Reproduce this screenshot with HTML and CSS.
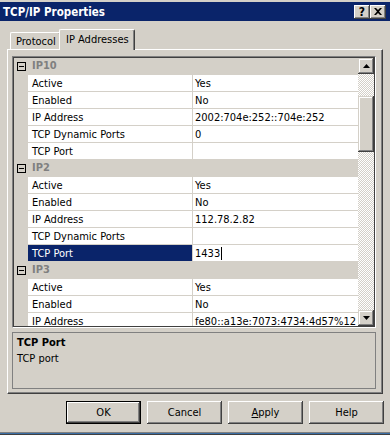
FILE: index.html
```html
<!DOCTYPE html>
<html lang="en">
<head>
    <meta charset="UTF-8">
    <title>TCP/IP Properties</title>
    <link rel="stylesheet" href="styles.css">
</head>
<body>
    <div class="window">
        <div class="titlebar">
            <span class="caption">TCP/IP Properties</span>
            <div class="caption-buttons">
                <span class="cap-btn">?</span>
                <span class="cap-btn">
                    <svg width="8" height="7" viewBox="0 0 8 7"><path d="M0 0h2l2 2 2-2h2L5 3.5 8 7H6L4 5 2 7H0l3-3.5z" fill="#000"/></svg>
                </span>
            </div>
        </div>

        <div class="tabs">
            <div class="tab">Protocol</div>
            <div class="tab active">IP Addresses</div>
        </div>

        <div class="panel">
            <div class="grid-box">
                <div class="grid">
                    <div class="cat"><span class="toggle"></span>IP10</div>
                    <div class="prop"><span class="name">Active</span><span class="value">Yes</span></div>
                    <div class="prop"><span class="name">Enabled</span><span class="value">No</span></div>
                    <div class="prop"><span class="name">IP Address</span><span class="value">2002:704e:252::704e:252</span></div>
                    <div class="prop"><span class="name">TCP Dynamic Ports</span><span class="value">0</span></div>
                    <div class="prop"><span class="name">TCP Port</span><span class="value"></span></div>

                    <div class="cat"><span class="toggle"></span>IP2</div>
                    <div class="prop"><span class="name">Active</span><span class="value">Yes</span></div>
                    <div class="prop"><span class="name">Enabled</span><span class="value">No</span></div>
                    <div class="prop"><span class="name">IP Address</span><span class="value">112.78.2.82</span></div>
                    <div class="prop"><span class="name">TCP Dynamic Ports</span><span class="value"></span></div>
                    <div class="prop selected"><span class="name">TCP Port</span><span class="value">1433<span class="caret"></span></span></div>

                    <div class="cat"><span class="toggle"></span>IP3</div>
                    <div class="prop"><span class="name">Active</span><span class="value">Yes</span></div>
                    <div class="prop"><span class="name">Enabled</span><span class="value">No</span></div>
                    <div class="prop"><span class="name">IP Address</span><span class="value">fe80::a13e:7073:4734:4d57%12</span></div>
                </div>
                <div class="scrollbar">
                    <div class="sb-btn">
                        <svg width="7" height="4" viewBox="0 0 7 4"><path d="M3.5 0L7 4H0z" fill="#000"/></svg>
                    </div>
                    <div class="sb-track"><div class="sb-thumb"></div></div>
                    <div class="sb-btn">
                        <svg width="7" height="4" viewBox="0 0 7 4"><path d="M0 0h7L3.5 4z" fill="#000"/></svg>
                    </div>
                </div>
            </div>

            <div class="desc">
                <div class="desc-title">TCP Port</div>
                <div class="desc-text">TCP port</div>
            </div>
        </div>

        <div class="buttons">
            <button class="btn default">OK</button>
            <button class="btn">Cancel</button>
            <button class="btn"><u>A</u>pply</button>
            <button class="btn">Help</button>
        </div>
        <div class="bottom-edge"></div>
    </div>
</body>
</html>
```

FILE: styles.css
```css
/* Classic dialog look */
body {
    margin: 0;
    background-color: #d4d0c8;
    font-family: "DejaVu Sans Condensed", "DejaVu Sans", sans-serif;
    font-stretch: semi-condensed;
    font-size: 11px;
    color: #000000;
}
.window {
    width: 390px;
    height: 435px;
    display: flex;
    flex-direction: column;
    overflow: hidden;
}
.titlebar {
    margin-top: 2px;
    height: 19px;
    flex-shrink: 0;
    background-color: #0a246a;
    display: flex;
    align-items: center;
    justify-content: space-between;
    padding: 0 4px 0 3px;
}
.caption {
    color: #ffffff;
    font-weight: bold;
    font-size: 11.5px;
}
.caption-buttons {
    display: flex;
}
.cap-btn {
    width: 16px;
    height: 14px;
    box-sizing: border-box;
    background-color: #d4d0c8;
    display: flex;
    align-items: center;
    justify-content: center;
    font-weight: bold;
    font-size: 12px;
    box-shadow: inset -1px -1px #404040, inset 1px 1px #ffffff, inset -2px -2px #808080;
}
.tabs {
    height: 28px;
    flex-shrink: 0;
    display: flex;
    align-items: flex-end;
    padding-left: 10px;
}
.tab {
    height: 17px;
    box-sizing: border-box;
    padding: 2px 0 0 5px;
    width: 51px;
    border-top: 1px solid #ffffff;
    border-left: 1px solid #ffffff;
    border-right: 1px solid #404040;
    border-radius: 2px 2px 0 0;
    box-shadow: inset -1px 0 #808080;
    white-space: nowrap;
}
.tab.active {
    position: relative;
    z-index: 1;
    width: 76px;
    height: 21px;
    margin-left: -2px;
    margin-bottom: -1px;
    padding: 3px 0 0 6px;
    background-color: #d4d0c8;
}
.panel {
    margin-left: 7px;
    width: 376px;
    height: 345px;
    flex-shrink: 0;
    box-sizing: border-box;
    border-top: 1px solid #ffffff;
    border-left: 1px solid #ffffff;
    border-right: 1px solid #404040;
    border-bottom: 1px solid #404040;
    box-shadow: inset -1px -1px #808080;
    padding: 6px 0 0 4px;
}
.grid-box {
    width: 364px;
    height: 272px;
    box-sizing: border-box;
    border: 1px solid #808080;
    border-right-color: #ffffff;
    border-bottom-color: #ffffff;
    box-shadow: inset 1px 1px #404040, inset -1px -1px #404040;
    padding: 1px;
    display: flex;
}
.grid {
    flex-grow: 1;
    overflow: hidden;
    background-color: #d4d0c8;
}
.cat, .prop {
    height: 17px;
    box-sizing: border-box;
    border-bottom: 1px solid #d4d0c8;
    display: flex;
    align-items: center;
    line-height: 16px;
}
.cat {
    padding-left: 3px;
    font-weight: bold;
    color: #808080;
}
.toggle {
    width: 9px;
    height: 9px;
    box-sizing: border-box;
    border: 1px solid #000000;
    margin-right: 6px;
    display: flex;
    align-items: center;
    justify-content: center;
}
.toggle::after {
    content: "";
    width: 5px;
    height: 1px;
    background-color: #000000;
}
.prop .name {
    margin-left: 14px;
    width: 165px;
    height: 16px;
    flex-shrink: 0;
    padding: 1px 0 0 4px;
    box-sizing: border-box;
    background-color: #ffffff;
    border-right: 1px solid #d4d0c8;
    white-space: nowrap;
    line-height: 15px;
}
.prop .value {
    flex-grow: 1;
    height: 16px;
    padding: 1px 0 0 2px;
    box-sizing: border-box;
    background-color: #ffffff;
    white-space: nowrap;
    display: flex;
    align-items: center;
}
.prop.selected .name {
    background-color: #0a246a;
    color: #ffffff;
}
.caret {
    width: 1px;
    height: 13px;
    margin-left: 1px;
    background-color: #000000;
}
.scrollbar {
    width: 16px;
    flex-shrink: 0;
    display: flex;
    flex-direction: column;
}
.sb-btn {
    width: 16px;
    height: 16px;
    box-sizing: border-box;
    background-color: #d4d0c8;
    display: flex;
    align-items: center;
    justify-content: center;
    box-shadow: inset -1px -1px #404040, inset 1px 1px #d4d0c8, inset -2px -2px #808080, inset 2px 2px #ffffff;
}
.sb-track {
    flex-grow: 1;
    background: repeating-conic-gradient(#d4d0c8 0 25%, #ffffff 0 50%) 0 0 / 2px 2px;
}
.sb-thumb {
    margin-top: 22px;
    height: 56px;
    background-color: #d4d0c8;
    box-shadow: inset -1px -1px #404040, inset 1px 1px #d4d0c8, inset -2px -2px #808080, inset 2px 2px #ffffff;
}
.desc {
    margin-top: 4px;
    width: 364px;
    height: 57px;
    box-sizing: border-box;
    border: 1px solid #808080;
    padding: 3px 0 0 4px;
    line-height: 14px;
}
.desc-title {
    font-weight: bold;
}
.desc-text {
    margin-top: 2px;
}
.buttons {
    margin-top: 7px;
    display: flex;
    justify-content: flex-end;
    gap: 6px;
    padding-right: 6px;
}
.btn {
    width: 75px;
    height: 23px;
    margin: 0;
    padding: 0;
    border: none;
    background-color: #d4d0c8;
    font-family: inherit;
    font-stretch: inherit;
    font-size: 11px;
    color: #000000;
    box-shadow: inset -1px -1px #404040, inset 1px 1px #ffffff, inset -2px -2px #808080, inset 2px 2px #d4d0c8;
}
.btn.default {
    border: 1px solid #000000;
}
.bottom-edge {
    margin-top: auto;
    height: 3px;
    border-top: 1px solid #808080;
    border-bottom: 1px solid #404040;
    box-sizing: border-box;
    background-color: #404040;
    box-shadow: inset 0 -1px #3a6ea5;
}
```
